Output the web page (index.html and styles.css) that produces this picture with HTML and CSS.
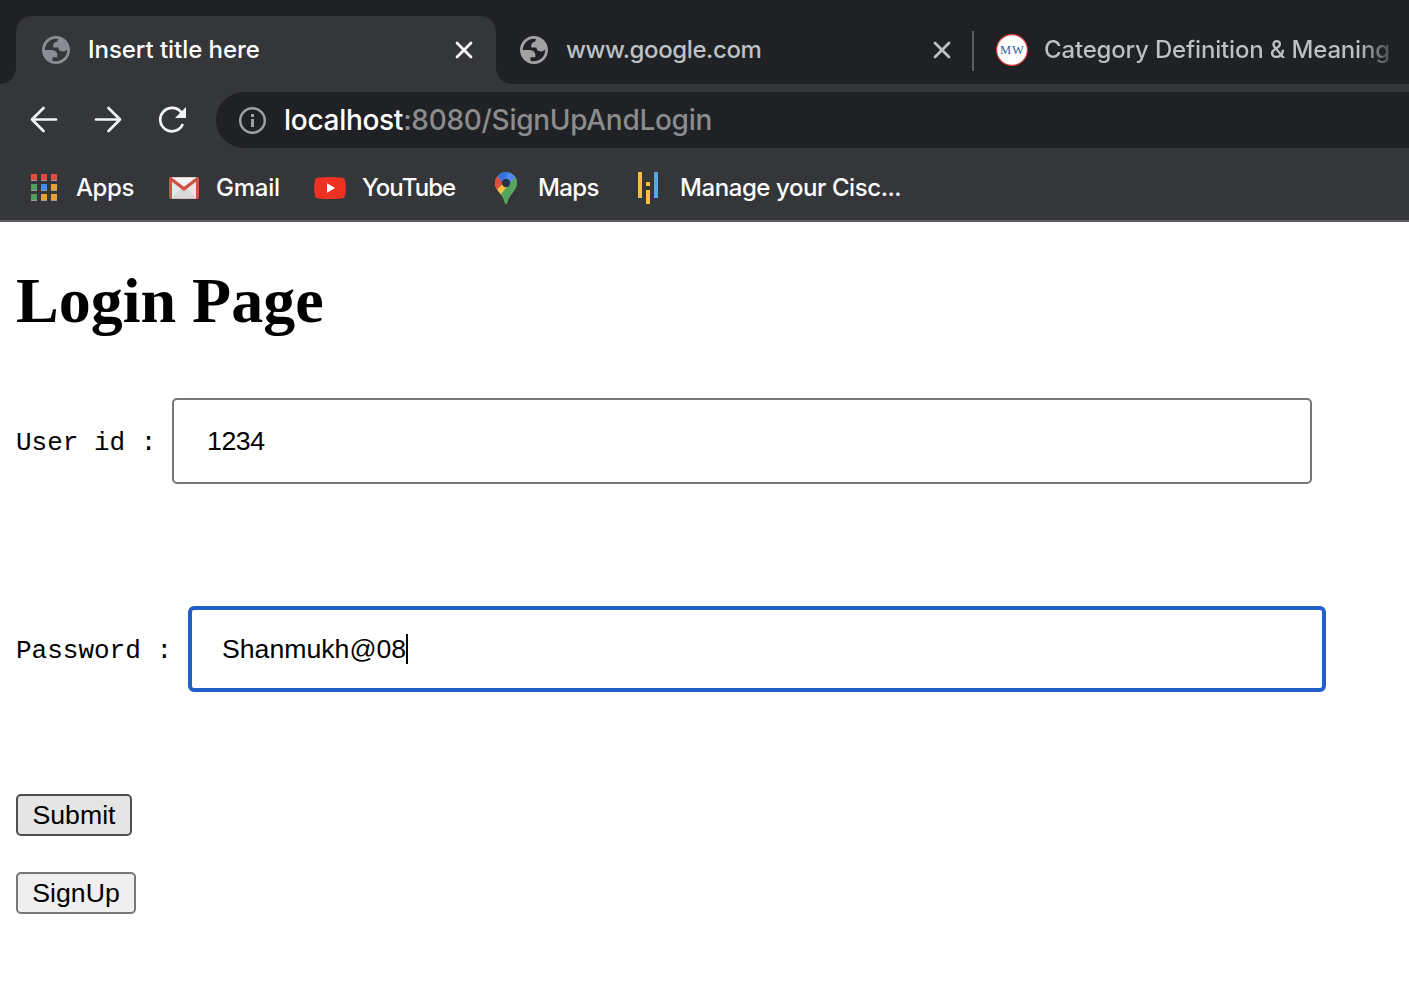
FILE: index.html
```html
<!DOCTYPE html>
<html lang="en">
<head>
<meta charset="utf-8">
<title>Insert title here</title>
<link rel="stylesheet" href="styles.css">
</head>
<body>
<svg width="0" height="0" class="defs">
  <symbol id="globe" viewBox="2 2 20 20"><path fill="currentColor" fill-rule="evenodd" d="M12 2C6.48 2 2 6.48 2 12s4.48 10 10 10 10-4.48 10-10S17.52 2 12 2zM4 12h4.4c3.407.022 4.922 1.73 4.543 5.127H9.488v2.47a8.004 8.004 0 0 0 10.498-8.083C19.327 12.504 18.332 13 17 13c-2.137 0-3.206-.916-3.206-2.75h-3.748c-.274-2.728.683-4.092 2.87-4.092 0-.975.327-1.597.811-1.97A8.004 8.004 0 0 0 4 12z"/></symbol>
  <symbol id="close" viewBox="0 0 18 18"><path d="M2 2l14 14M16 2L2 16" stroke="currentColor" stroke-width="2.8" stroke-linecap="round" fill="none"/></symbol>
</svg>
<header class="chrome">
  <div class="tabs">
    <div class="tab active">
      <svg class="globe" width="28" height="28"><use href="#globe"/></svg>
      <span class="title t1">Insert title here</span>
      <svg class="close" width="18" height="18"><use href="#close"/></svg>
    </div>
    <div class="tab second">
      <svg class="globe" width="28" height="28"><use href="#globe"/></svg>
      <span class="title t2">www.google.com</span>
      <svg class="close" width="18" height="18"><use href="#close"/></svg>
    </div>
    <div class="divider"></div>
    <div class="tab third">
      <svg width="32" height="32" viewBox="0 0 32 32"><circle cx="16" cy="16" r="15.4" fill="#fff" stroke="#d9383a" stroke-width="1.2"/><text x="4" y="20" class="mw">M</text><text x="16" y="20" class="mw">W</text></svg>
      <span class="title t3">Category Definition &amp; Meaning</span>
    </div>
  </div>
  <div class="toolbar">
    <svg width="28" height="28" viewBox="0 0 28 28" class="nav"><path d="M26 13.500H3M13.500 2L2 13.500l11.500 11.500"/></svg>
    <svg width="28" height="28" viewBox="0 0 28 28" class="nav"><path d="M2 13.500H25M14.500 2L26 13.500 14.500 25"/></svg>
    <svg width="28" height="28" viewBox="0 0 28 28" class="nav reload"><path d="M23.800 7.200A11.700 11.700 0 1 0 24.800 18"/><path class="tip" d="M28 1v11H17z"/></svg>
    <div class="omnibox">
      <svg width="28" height="28" viewBox="0 0 28 28"><circle cx="14.500" cy="14.500" r="12.300" fill="none" stroke="#9aa0a6" stroke-width="2.500"/><path d="M13 8h3v3h-3zM13 13h3v8h-3z" fill="#9aa0a6"/></svg>
      <span class="url"><b>localhost</b>:8080/SignUpAndLogin</span>
    </div>
  </div>
  <nav class="bookmarks">
    <a class="bm apps"><svg width="28" height="28" viewBox="0 0 28 28" shape-rendering="crispEdges">
      <path fill="#9b9b9b" d="M1 6h6v1H1zM11 6h6v1h-6zM21 6h6v1h-6zM1 16h6v1H1zM11 16h6v1h-6zM21 16h6v1h-6zM1 26h6v1H1zM11 26h6v1h-6zM21 26h6v1h-6z"/>
      <path fill="#e24a3e" d="M1 0h6v6H1zM11 0h6v6h-6zM21 0h6v6h-6z"/><path fill="#529c60" d="M1 10h6v6H1zM1 20h6v6H1z"/><path fill="#448aed" d="M11 10h6v6h-6z"/><path fill="#e5a236" d="M21 10h6v6h-6zM11 20h6v6h-6zM21 20h6v6h-6z"/></svg><span>Apps</span></a>
    <a class="bm gmail"><svg width="32" height="32" viewBox="0 0 32 32"><rect x="1" y="5" width="30" height="22" rx="2" fill="#d15345"/><path fill="#e6e6e6" d="M4 8l12 9 12-9v18.500H4z"/><path fill="#f5f5f5" d="M3 5.200h26L16 15z"/><path fill="#d7d7d7" d="M4 26.500l9-10 3 2.500 3-2.500 9 10z"/><path d="M3 7l13 10L29 7" fill="none" stroke="#d15345" stroke-width="3"/></svg><span>Gmail</span></a>
    <a class="bm youtube"><svg width="32" height="32" viewBox="0 0 32 32"><path fill="#ed3224" d="M4.500 5.500Q16 4.500 27.500 5.500q3.200.3 3.700 3.500 1.200 7 0 14-.5 3.200-3.700 3.500-11.500 1-23 0-3.200-.3-3.700-3.500-1.200-7 0-14 .5-3.200 3.700-3.500z"/><path fill="#fff" d="M13 11.200v9.600l8-4.800z"/></svg><span>YouTube</span></a>
    <a class="bm maps"><svg width="22" height="32" viewBox="0 0 22 32"><defs><clipPath id="pin"><path d="M11 0a11 11 0 0 1 11 11c0 8-8 11-9.600 19.300Q12 32 11 32t-1.400-1.700C8.500 22 0 19 0 11A11 11 0 0 1 11 0z"/></clipPath></defs><g clip-path="url(#pin)"><path fill="#54a65b" d="M0 0h22v32H0z"/><path fill="#f5bf42" d="M0 12L7 8l8 6L4 25l-5-3z"/><path fill="#dd4f43" d="M0 3l3 1 7 5-8 9-4-5z"/><path fill="#3573df" d="M2.300 4.300L6 0h10l-8 11z"/><path fill="#5288ef" d="M14 .3L23 0v6L11 15 7.500 9z"/><path fill="#54a65b" d="M20.500 5L24 4v28H6V22z"/></g><circle cx="11" cy="11" r="4.200" fill="#28334a"/></svg><span>Maps</span></a>
    <a class="bm cisco"><svg width="20" height="32" viewBox="0 0 20 32" shape-rendering="crispEdges"><path fill="#f8bd42" d="M0 0h4v26H0zM8 10h4v4H8zM8 18h4v14H8z"/><path fill="#59a9dc" d="M16 0h4v26h-4z"/></svg><span>Manage your Cisc...</span></a>
  </nav>
</header>
<main class="page">
  <h1>Login Page</h1>
  <form>
    <div class="field user"><label for="uid">User id :</label><input id="uid" type="text" value="1234"></div>
    <div class="field pass"><label>Password :</label><div class="focused"><span>Shanmukh@08</span><i></i></div></div>
    <button type="button" class="submit">Submit</button>
    <button type="button" class="signup">SignUp</button>
  </form>
</main>
</body>
</html>
```
FILE: styles.css
```css
* { box-sizing: border-box; }
body { margin: 0; width: 1409px; height: 1002px; overflow: hidden; background: #fff; color: #000; }
.defs { position: absolute; }
svg { display: block; flex: none; }

.chrome { height: 222px; background: #35363a; border-bottom: 2px solid #5d5e62; font: 450 24px Inter, sans-serif; color: #fff; overflow: hidden; }
.tabs { display: flex; height: 84px; padding: 16px 0 0 16px; background: #202124; }
.tab { display: flex; align-items: center; height: 68px; color: #bdc1c6; white-space: nowrap; flex: none; }
.active { position: relative; width: 480px; padding-left: 26px; background: #35363a; border-radius: 16px 16px 0 0; color: #fff; }
.active::before, .active::after { content: ""; position: absolute; bottom: 0; width: 16px; height: 16px; }
.active::before { left: -16px; background: radial-gradient(circle at 0 0, #202124 15.500px, #35363a 16.200px); }
.active::after { right: -16px; background: radial-gradient(circle at 100% 0, #202124 15.500px, #35363a 16.200px); }
.active .globe { color: #898e94; }
.second .globe { color: #a2a2a2; }
.second { width: 476px; padding-left: 24px; }
.title { margin-left: 18px; line-height: 32px; }
.t1 { letter-spacing: -.05px; }
.t2 { letter-spacing: -.4px; }
.t3 { letter-spacing: -.17px; }
.close { margin-left: auto; }
.active .close { margin-right: 23px; }
.second .close { margin-right: 21px; }
.divider { width: 2px; height: 40px; margin-top: 15px; background: #5b5e62; }
.third { margin-left: 22px; }
.third .title { margin-left: 16px; background: linear-gradient(90deg, #bdc1c6 315px, #3c3e41 350px); -webkit-background-clip: text; background-clip: text; color: transparent; }
.mw { font: 12.500px "Liberation Serif", serif; fill: #2e65a3; }

.toolbar { display: flex; align-items: center; height: 72px; padding-left: 30px; }
.nav { margin-right: 36px; fill: none; stroke: #f1f3f4; stroke-width: 2.700px; stroke-linecap: round; stroke-linejoin: round; }
.reload { margin-right: 30px; stroke-linecap: butt; }
.tip { fill: #f1f3f4; stroke: none; }
.omnibox { display: flex; align-items: center; flex: 1; height: 56px; padding-left: 22px; border-radius: 28px 0 0 28px; background: #202124; }
.url { margin-left: 18px; font-size: 28px; letter-spacing: -.29px; color: #8b8c8e; white-space: nowrap; }
.url b { font-weight: inherit; color: #fff; }

.bookmarks { display: flex; height: 64px; padding-left: 30px; }
.bm { display: flex; align-items: center; height: 64px; white-space: nowrap; }
.bm span { padding-bottom: 2px; letter-spacing: -.42px; }
.apps { width: 138px; gap: 18px; }
.gmail { width: 146px; gap: 16px; }
.gmail span { letter-spacing: -.25px; }
.youtube { width: 181px; gap: 16px; }
.youtube span { letter-spacing: -.9px; }
.maps { width: 143px; gap: 21px; }
.maps span { letter-spacing: -.6px; }
.cisco { gap: 22px; }

.page { padding-left: 16px; }
h1 { margin: 0; padding-top: 42px; height: 176px; font: bold 64px/74px "Liberation Serif", serif; }
.field { display: flex; align-items: center; height: 86px; font: 26px "Liberation Mono", monospace; white-space: pre; }
.field label { padding-top: 4px; }
.user label { width: 156px; }
.pass label { width: 172px; }
.field input { width: 1140px; height: 86px; padding: 0 33px; border: 2px solid #767676; border-radius: 5px; background: #fff; font: 26.667px "Liberation Sans", sans-serif; letter-spacing: -.4px; color: #000; outline: 0; }
.pass { margin-top: 122px; }
.focused { display: flex; align-items: center; width: 1138px; height: 86px; padding-left: 30px; border: 4px solid #2260c8; border-radius: 6px; font: 26.667px "Liberation Sans", sans-serif; }
.focused i { width: 2px; height: 30px; background: #000; }
button { display: block; height: 42px; padding: 1px 0 0; border: 2px solid #767676; border-radius: 5px; background: #efefef; font: 26.667px "Liberation Sans", sans-serif; color: #000; }
.submit { width: 116px; margin: 102px 0 36px; border-color: #4f4f4f; background: #e5e5e5; }
.signup { width: 120px; margin: 0; }
```
